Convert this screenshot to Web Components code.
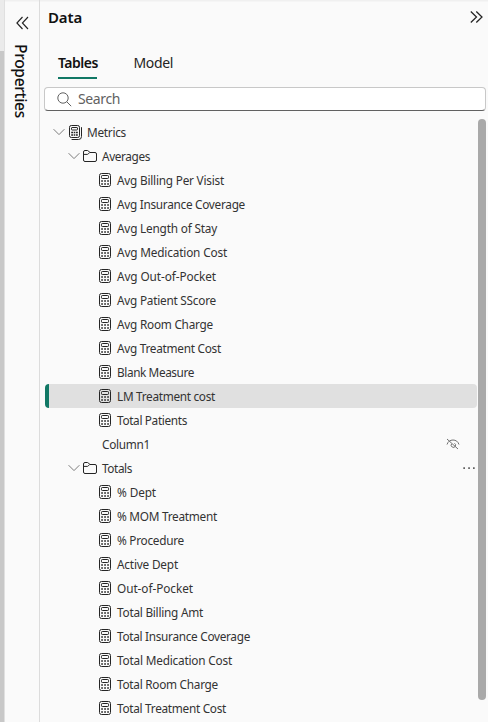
<!DOCTYPE html>
<html lang="en">
<head>
<meta charset="utf-8">
<title>Data pane</title>
<style>
html,body{margin:0;height:100%;overflow:hidden;background:#fafafa}
body{font-family:"Noto Sans","Open Sans",sans-serif;color:#242424}
</style>
</head>
<body>
<data-workspace></data-workspace>
<script>
const icons = {
  chevron: '<svg width="12" height="8" viewBox="0 0 12 8" fill="none" stroke="#7c7c7c"><path d="M.6 1.2 6 6.6l5.4-5.4"/></svg>',
  measure: '<svg width="12" height="14" viewBox="0 0 12 14" fill="none" stroke="#242424"><rect x=".5" y=".5" width="11" height="13" rx="2"/><rect x="2.500" y="2.500" width="7" height="3" rx=".8"/><path d="M2.200 8h1.700M5.200 8h1.700M8.200 8h1.700M2.200 11h1.700M5.200 11h1.700M8.200 11h1.700" stroke-width="1.700"/></svg>',
  group: '<svg width="13" height="15" viewBox="0 0 13 15" fill="none" stroke="#242424"><rect x=".5" y=".5" width="10" height="12" rx="1.8"/><rect x="2.5" y="2.5" width="6" height="2.5" rx=".6"/><path d="M2.200 7.500H4M4.700 7.500h1.600M7 7.500h1.800M2.200 10H4M4.700 10h1.600M7 10h1.800" stroke-width="1.500"/><path d="M12.500 2.200v9.300q0 3-3 3H2.600"/></svg>',
  folder: '<svg width="14" height="12" viewBox="0 0 14 12" fill="none" stroke="#242424"><path d="M.5 2Q.5.5 2 .5h2.500q.6 0 1 .5l1.300 1.500H12q1.500 0 1.500 1.500v6q0 1.500-1.500 1.500H2Q.5 11.500.5 10z"/><path d="M.6 4.400h3.600q.7 0 1.100-.5l1.400-1.400"/></svg>',
  hidden: '<svg width="14" height="12" viewBox="0 0 14 12" fill="none" stroke="#707070"><path d="M1 6.500C2 3.500 4.200 2 7 2s5 1.500 6 4.500M1 1l11 10M8.500 5.300A2.200 2.200 0 1 1 5.500 6"/></svg>',
  more: '<svg width="12" height="4" viewBox="0 0 12 4" fill="#606060"><path d="M.3 1.200H2v1.700H.3zM5.200 1.200h1.700v1.700H5.200zM10 1.200h1.700v1.700H10z"/></svg>',
  search: '<svg width="15" height="15" viewBox="0 0 15 15" fill="none" stroke="#616161"><circle cx="6" cy="6" r="5.200"/><path d="m9.700 9.700 4.500 4.500"/></svg>',
  collapse: '<svg width="13" height="14" viewBox="0 0 13 14" fill="none" stroke="#242424" stroke-width="1.150"><path d="M6.500 1 .9 7l5.600 6M12 1 6.400 7l5.600 6"/></svg>',
  expand: '<svg width="13" height="12" viewBox="0 0 13 12" fill="none" stroke="#242424" stroke-width="1.250"><path d="m.8.5 5.700 5.500-5.700 5.500M6.300.5 12 6l-5.700 5.500"/></svg>'
};

function shadow(host, html) {
  const t = document.createElement('template');
  t.innerHTML = html;
  host.attachShadow({mode: 'open'}).append(t.content.cloneNode(true));
}

/* Label whose tracking is tuned so that the text occupies a given width. */
customElements.define('fit-label', class extends HTMLElement {
  connectedCallback() {
    shadow(this, '<style>:host{display:block;white-space:nowrap}span{display:inline-block}</style><span><slot></slot></span>');
    const span = this.shadowRoot.querySelector('span');
    const n = this.textContent.length;
    const vertical = this.hasAttribute('vertical');
    const r = span.getBoundingClientRect();
    const size = vertical ? r.height : r.width;
    span.style.letterSpacing = ((+this.getAttribute('width') - size) / n) + 'px';
  }
});

customElements.define('ui-icon', class extends HTMLElement {
  connectedCallback() {
    shadow(this, `<style>:host{display:block;flex:none}svg{display:block}</style>${icons[this.getAttribute('name')]}`);
  }
});

customElements.define('tree-row', class extends HTMLElement {
  connectedCallback() {
    const kind = this.getAttribute('kind');
    const pad = {group: 8, folder: 23, measure: 54, column: 57}[kind];
    const parent = kind === 'group' || kind === 'folder';
    const tail = this.getAttribute('tail');
    shadow(this, `<style>
      :host{display:block;height:24px;border-radius:4px;overflow:hidden}
      :host([selected]){background:linear-gradient(90deg,#117865 4px,#e0e0e0 4px)}
      .row{height:24px;display:flex;align-items:center;padding-left:${pad}px;box-sizing:border-box;font-size:11.8px;line-height:24px;color:#333}
      .chev{margin-right:${kind === 'group' ? 4 : 3}px}
      .kind{margin-right:${kind === 'measure' ? 6 : 5}px}
      fit-label{height:24px}
      .tail{margin-left:auto;margin-right:${tail === 'hidden' ? 17 : 2}px}
    </style><div class="row">
      ${parent ? '<ui-icon class="chev" name="chevron"></ui-icon>' : ''}
      ${kind !== 'column' ? `<ui-icon class="kind" name="${kind}"></ui-icon>` : ''}
      <fit-label width="${this.getAttribute('width')}">${this.textContent}</fit-label>
      ${tail ? `<ui-icon class="tail" name="${tail}"></ui-icon>` : ''}
    </div>`);
  }
});

customElements.define('field-tree', class extends HTMLElement {
  connectedCallback() {
    const rows = [
      ['group', 'Metrics', 39], ['folder', 'Averages', 48],
      ['measure', 'Avg Billing Per Visist', 107], ['measure', 'Avg Insurance Coverage', 128],
      ['measure', 'Avg Length of Stay', 100], ['measure', 'Avg Medication Cost', 110],
      ['measure', 'Avg Out-of-Pocket', 99], ['measure', 'Avg Patient SScore', 99],
      ['measure', 'Avg Room Charge', 96], ['measure', 'Avg Treatment Cost', 104],
      ['measure', 'Blank Measure', 77], ['measure', 'LM Treatment cost', 98, 'selected'],
      ['measure', 'Total Patients', 70], ['column', 'Column1', 48, 'tail="hidden"'],
      ['folder', 'Totals', 30, 'tail="more"'], ['measure', '% Dept', 39],
      ['measure', '% MOM Treatment', 100], ['measure', '% Procedure', 67],
      ['measure', 'Active Dept', 61], ['measure', 'Out-of-Pocket', 76],
      ['measure', 'Total Billing Amt', 86], ['measure', 'Total Insurance Coverage', 133],
      ['measure', 'Total Medication Cost', 115], ['measure', 'Total Room Charge', 101],
      ['measure', 'Total Treatment Cost', 109]
    ];
    shadow(this, `<style>
      :host{display:flex;margin-top:9px}
      .rows{width:432px;margin-left:5px}
      .bar{width:8px;height:581px;margin-left:1px;border-radius:4px;background:#a9a9a9;margin-top:-1px}
    </style><div class="rows">${rows.map(([k, t, w, x = '']) =>
      `<tree-row kind="${k}" width="${w}" ${x}>${t}</tree-row>`).join('')}</div><div class="bar"></div>`);
  }
});

customElements.define('search-box', class extends HTMLElement {
  connectedCallback() {
    shadow(this, `<style>
      :host{display:flex;align-items:center;box-sizing:border-box;width:442px;height:24px;margin:8px 0 0 4px;padding-left:12px;gap:6px;
        background:#fff;border:1px solid #c8c8c8;border-bottom-color:#616161;border-radius:4px;font-size:14px;line-height:22px;color:#616161}
    </style><ui-icon name="search"></ui-icon><fit-label width="42">Search</fit-label>`);
  }
});

customElements.define('pane-tabs', class extends HTMLElement {
  connectedCallback() {
    shadow(this, `<style>
      :host{display:flex;gap:36.500px;padding-left:18px;font-size:14px;line-height:24px;color:#242424}
      .tab{height:28px;box-sizing:border-box}
      .on{font-weight:600;color:#111;border-bottom:2px solid #117865;width:39px}
    </style><div class="tab on"><fit-label width="40">Tables</fit-label></div><div class="tab"><fit-label width="39.500">Model</fit-label></div>`);
  }
});

customElements.define('data-workspace', class extends HTMLElement {
  connectedCallback() {
    shadow(this, `<style>
      :host{display:flex;width:488px;height:722px;overflow:hidden;box-sizing:border-box;background:linear-gradient(#f0f0f0 1px,#fafafa 2px)}
      .edge{width:4px;border-right:1px solid #e0e0e0;background:linear-gradient(#ebebeb 51px,#c8c8c8 51px)}
      .side{width:34px;border-right:1px solid #dcdcdc;display:flex;flex-direction:column;align-items:center;padding-top:16px;box-sizing:content-box}
      .title{writing-mode:vertical-rl;font-size:15.500px;font-weight:500;line-height:22px;margin-top:14px;color:#111;margin-right:3px}
      .main{width:448px;flex:none}
      .head{height:51px;box-sizing:border-box;display:flex;justify-content:space-between;padding:6px 5.500px 0 8px;font-size:15px;font-weight:600;line-height:23px;color:#111}
      .head ui-icon{margin-top:5px}
    </style>
    <div class="edge"></div>
    <div class="side"><ui-icon name="collapse"></ui-icon><fit-label class="title" vertical width="74">Properties</fit-label></div>
    <div class="main">
      <div class="head"><fit-label width="34">Data</fit-label><ui-icon name="expand"></ui-icon></div>
      <pane-tabs></pane-tabs><search-box></search-box><field-tree></field-tree>
    </div>`);
  }
});
</script>
</body>
</html>
